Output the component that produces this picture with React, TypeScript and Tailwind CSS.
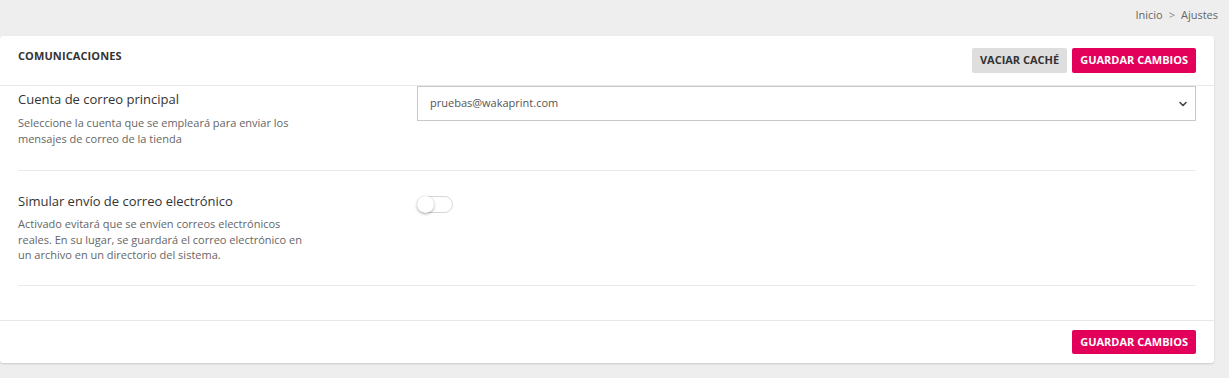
import React from 'react';

export default function App() {
  return (
    <div className="min-h-[378px] bg-[#eeeeee] pb-4 pr-[15px] text-[#333] font-['Open_Sans',sans-serif]">
      {/* breadcrumb */}
      <div className="flex h-9 items-start justify-end pt-[7px] text-[11px] text-[#666]">
        <span>Inicio</span>
        <span className="mx-[6px] text-[#888]">&gt;</span>
        <span className="mr-[-4px]">Ajustes</span>
      </div>

      <div className="rounded-[3px] bg-white shadow-[0_1px_2px_rgba(0,0,0,0.15)]">
        <div className="flex h-[50px] items-start justify-between border-b border-[#e8e8e8] px-[18px]">
          <h2 className="mt-[12px] text-[11px] font-bold tracking-[0.1px] text-[#333]">COMUNICACIONES</h2>
          <div className="mt-[12px] flex gap-[5px]">
            <button className="h-[25px] rounded-[2px] bg-[#dedede] px-[8px] text-[11px] font-bold text-[#333]">VACIAR CACHÉ</button>
            <button className="h-[25px] rounded-[2px] bg-[#e2005a] px-[8px] text-[11px] font-bold text-white">GUARDAR CAMBIOS</button>
          </div>
        </div>

        <div className="px-[18px]">
          <Row
            label="Cuenta de correo principal"
            desc={['Seleccione la cuenta que se empleará para enviar los', 'mensajes de correo de la tienda']}
            first
          >
            <div className="flex h-[35px] items-center justify-between border border-[#c8c8c8] pl-[12px] pr-[6px] text-[11px] text-[#555]">
              <span>pruebas@wakaprint.com</span>
              <svg width="12" height="12" viewBox="0 0 24 24" fill="none" stroke="#444" strokeWidth="3.2" strokeLinecap="round" strokeLinejoin="round">
                <path d="M6 9l6 6 6-6" />
              </svg>
            </div>
          </Row>
          <Row
            label="Simular envío de correo electrónico"
            desc={[
              'Activado evitará que se envíen correos electrónicos',
              'reales. En su lugar, se guardará el correo electrónico en',
              'un archivo en un directorio del sistema.',
            ]}
          >
            <div className="relative mt-[25px] h-[17px] w-[36px] rounded-full border border-[#d6d6d6] bg-white">
              <div className="absolute left-[-1px] top-[-1px] h-[17px] w-[17px] rounded-full bg-white shadow-[0_1px_3px_rgba(0,0,0,0.35)]" />
            </div>
          </Row>
        </div>

        <div className="mt-[34px] flex h-[43px] items-start justify-end border-t border-[#e8e8e8] px-[18px] pt-[9px]">
          <button className="h-[24px] rounded-[2px] bg-[#e2005a] px-[8px] text-[11px] font-bold text-white">GUARDAR CAMBIOS</button>
        </div>
      </div>
    </div>
  );
}

function Row({ label, desc, first, children }: { label: string; desc: string[]; first?: boolean; children: React.ReactNode }) {
  return (
    <div className={`flex border-b border-[#ebebeb] ${first ? 'h-[85px]' : 'h-[115px]'}`}>
      <div className={`w-[399px] shrink-0 ${first ? 'pt-[3px]' : 'pt-[20px]'}`}>
        <div className="text-[13px] leading-[20px] text-[#333]">{label}</div>
        <div className={`text-[11px] text-[#666] ${first ? 'mt-[6px] leading-[16px]' : 'mt-[5px] leading-[15.5px]'}`}>
          {desc.map((d) => (
            <div key={d}>{d}</div>
          ))}
        </div>
      </div>
      <div className="flex-1">{children}</div>
    </div>
  );
}
